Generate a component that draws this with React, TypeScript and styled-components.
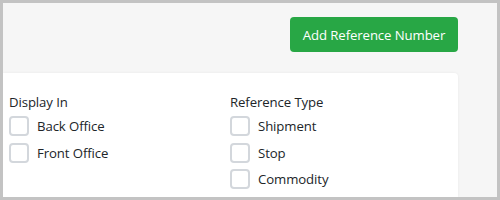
import { createGlobalStyle, styled } from "styled-components";

const GlobalStyle = createGlobalStyle`
  html, body {
    margin: 0;
    padding: 0;
  }
  body {
    font-family: "Open Sans", "Noto Sans", sans-serif;
    color: #212529;
  }
`;

const Frame = styled.div`
  box-sizing: border-box;
  width: 500px;
  height: 200px;
  border: 3px solid #c3c3c3;
  background: #f6f6f6;
  overflow: hidden;
  display: flex;
  flex-direction: column;
  padding: 14px 39px 0 0;
`;

const Toolbar = styled.div`
  display: flex;
  justify-content: flex-end;
  margin-bottom: 21px;
`;

const AddButton = styled.button`
  height: 35px;
  width: 168px;
  padding: 0;
  border: 0;
  border-radius: 4px;
  background: #28a745;
  color: #fff;
  font-family: "Open Sans", "Noto Sans", sans-serif;
  font-size: 13.2px;
  letter-spacing: -0.1px;
  cursor: pointer;
`;

const Panel = styled.div`
  flex: 1;
  background: #fff;
  border-radius: 0 4px 0 0;
  box-shadow: 0 0 3px rgba(0, 0, 0, 0.06);
  display: grid;
  grid-template-columns: 221px 1fr;
  padding: 19px 0 0 6px;
`;

const Column = styled.div`
  display: flex;
  flex-direction: column;
`;

const Heading = styled.div`
  font-size: 13.2px;
  letter-spacing: -0.1px;
  line-height: 20px;
  margin-bottom: 4px;
`;

const Option = styled.label`
  display: flex;
  align-items: center;
  gap: 8px;
  height: 20px;
  margin-bottom: 6.6px;
  font-size: 13.2px;
  letter-spacing: -0.1px;
  cursor: pointer;
`;

const Box = styled.span`
  box-sizing: border-box;
  width: 20px;
  height: 20px;
  border: 2px solid #d3d7dc;
  border-radius: 4px;
  background: #fff;
`;

const displayIn = ["Back Office", "Front Office"];
const referenceTypes = ["Shipment", "Stop", "Commodity"];

export default function App() {
  return (
    <>
      <GlobalStyle />
      <Frame>
        <Toolbar>
          <AddButton>Add Reference Number</AddButton>
        </Toolbar>
        <Panel>
          <Column>
            <Heading>Display In</Heading>
            {displayIn.map((o) => (
              <Option key={o}>
                <Box />
                {o}
              </Option>
            ))}
          </Column>
          <Column>
            <Heading>Reference Type</Heading>
            {referenceTypes.map((o) => (
              <Option key={o}>
                <Box />
                {o}
              </Option>
            ))}
          </Column>
        </Panel>
      </Frame>
    </>
  );
}
